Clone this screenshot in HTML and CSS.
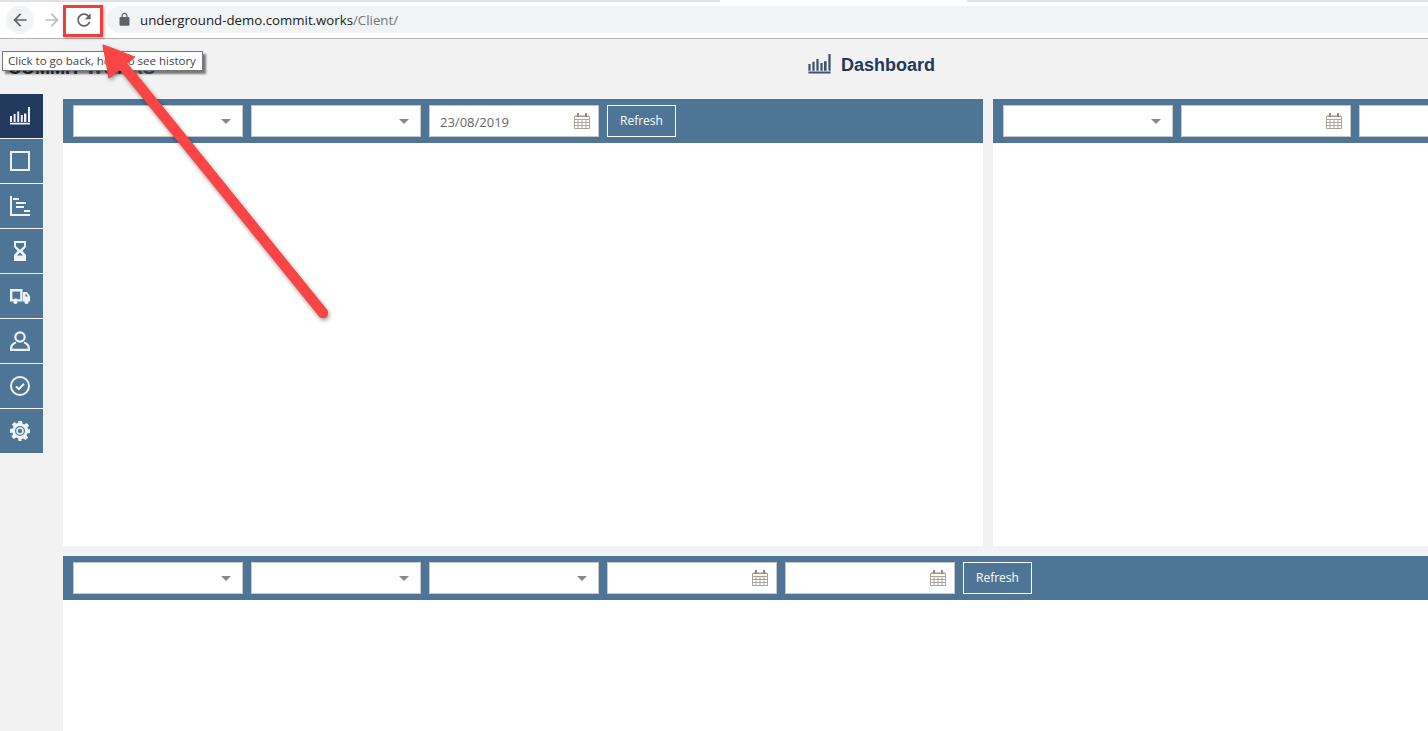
FILE: index.html
```html
<!DOCTYPE html>
<html lang="en">
<head>
<meta charset="utf-8">
<title>Dashboard</title>
<link rel="stylesheet" href="styles.css">
</head>
<body>
<svg class="defs" width="0" height="0" aria-hidden="true">
  <symbol id="i-bars" viewBox="0 0 20 18">
    <path fill="currentColor" d="M0 9h2v6H0zM3.600 7h2v8h-2zM7.200 4.500h2V15h-2zM10.800 8h2v7h-2zM14 6.500h2.400V15H14zM18 0h2v15h-2zM0 15.800h20V17.500H0z"/>
  </symbol>
  <symbol id="i-square" viewBox="0 0 20 20">
    <rect x="1" y="1" width="18" height="18" fill="none" stroke="currentColor" stroke-width="2"/>
  </symbol>
  <symbol id="i-gantt" viewBox="0 0 20 20">
    <path fill="currentColor" d="M0 0h2v18h18v2H0zM3 2h6v2H3zM6 6h10v2H6zM6 10h8v2H6zM14 14h6v2h-6z"/>
  </symbol>
  <symbol id="i-hourglass" viewBox="0 0 12 20">
    <path fill="currentColor" fill-rule="evenodd" d="M0 0h12v6L8.500 10 12 14v6H0v-6l3.500-4L0 6zM2 2v3.200L6 8.700l4-3.500V2zM6 11.500L3 14.500h6z"/>
  </symbol>
  <symbol id="i-truck" viewBox="0 0 20 15">
    <path fill="currentColor" fill-rule="evenodd" d="M0 0h12.500v12.500H8a2.800 2.800 0 0 0-5 0H0zM2.400 2.400v7.800h1c1-.9 3.300-.9 4.300 0h2.500V2.400z"/>
    <path fill="currentColor" fill-rule="evenodd" d="M13 3h3.800L20 7v5.500h-1a2.800 2.800 0 0 0-5 0h-1zM15.500 5v2.500h2.400l-1.800-2.500z"/>
    <circle cx="5.500" cy="12.800" r="2.200" fill="currentColor"/>
    <circle cx="16.500" cy="12.800" r="2.200" fill="currentColor"/>
  </symbol>
  <symbol id="i-person" viewBox="0 0 20 20">
    <g fill="none" stroke="currentColor" stroke-width="2.200">
      <circle cx="10" cy="6" r="4.700"/>
      <path d="M6 11.500C3 12.500 1.100 14.500 1.100 17.500V18.900h17.800v-1.400c0-3-1.900-5-4.900-6"/>
    </g>
  </symbol>
  <symbol id="i-check" viewBox="0 0 20 20">
    <circle cx="10" cy="10" r="9" fill="none" stroke="currentColor" stroke-width="2"/>
    <path d="M6 10.500l2.800 2.500L14 7.800" fill="none" stroke="currentColor" stroke-width="2"/>
  </symbol>
  <symbol id="i-gear" viewBox="0 0 20 20">
    <path fill="currentColor" fill-rule="evenodd" d="M8 0h4l.5 2.800 1.700.7 2.400-1.600 2.500 2.500-1.600 2.400.7 1.700L20 8v4l-2.800.5-.7 1.700 1.600 2.400-2.500 2.500-2.400-1.600-1.700.7L11.500 20h-3L8 17.200l-1.700-.7-2.400 1.600-2.500-2.500 1.600-2.400-.7-1.700L0 12V8l2.800-.5.7-1.700-1.600-2.400 2.500-2.500 2.400 1.600 1.700-.7zM10 5a5 5 0 1 0 0 10 5 5 0 0 0 0-10z"/>
    <circle cx="10" cy="10" r="3" fill="none" stroke="currentColor" stroke-width="1.600"/>
  </symbol>
  <symbol id="i-cal" viewBox="0 0 16 16">
    <path fill="#cfc8b8" d="M1 2h14v2H1z"/>
    <path fill="none" stroke="#aaa49a" d="M.5 3.500h15v12H.5zM.5 6.500h15M.5 9.500h15M.5 12.500h15M4 6.500v9M8 6.500v9M12 6.500v9"/>
    <path fill="#8c8c8c" d="M3 0h2v4H3zM11 0h2v4h-2z"/>
  </symbol>
</svg>

<div class="browser">
  <div class="tabstrip"><span class="tab-gap"></span></div>
  <div class="toolbar-row">
    <span class="nav-btn nav-back"><svg viewBox="0 0 24 24" width="20" height="20"><path fill="currentColor" d="M20 11H7.830l5.590-5.590L12 4l-8 8 8 8 1.410-1.410L7.830 13H20v-2z"/></svg></span>
    <span class="nav-btn nav-forward"><svg viewBox="0 0 24 24" width="20" height="20"><path fill="currentColor" d="M12 4l-1.410 1.410L16.170 11H4v2h12.170l-5.580 5.590L12 20l8-8z"/></svg></span>
    <span class="nav-btn nav-reload"><svg viewBox="0 0 24 24" width="20" height="20"><path fill="currentColor" d="M17.650 6.350C16.200 4.900 14.210 4 12 4c-4.420 0-7.990 3.580-7.990 8s3.570 8 7.990 8c3.730 0 6.840-2.550 7.730-6h-2.080c-.82 2.330-3.040 4-5.650 4-3.310 0-6-2.690-6-6s2.690-6 6-6c1.660 0 3.140.69 4.220 1.780L13 11h7V4l-2.350 2.350z"/></svg></span>
    <div class="omnibox">
      <svg class="lock" viewBox="0 0 24 24" width="15" height="15"><path fill="currentColor" d="M18 8h-1V6c0-2.760-2.240-5-5-5S7 3.240 7 6v2H6c-1.100 0-2 .9-2 2v10c0 1.100.9 2 2 2h12c1.100 0 2-.9 2-2V10c0-1.100-.9-2-2-2zM9 6c0-1.660 1.340-3 3-3s3 1.340 3 3v2H9V6z"/></svg>
      <span class="url">underground-demo.commit.works<span class="url-path">/Client/</span></span>
    </div>
  </div>
</div>

<div class="app">
  <header class="app-header">
    <div class="logo">COMMIT <span class="logo-accent">WORKS</span></div>
    <h1 class="page-title"><svg class="title-icon"><use href="#i-bars"/></svg>Dashboard</h1>
    <div></div>
  </header>
  <div class="app-body">
    <nav class="sidebar">
      <a class="side-item is-active"><svg class="ic-bars"><use href="#i-bars"/></svg></a>
      <a class="side-item"><svg class="ic-20"><use href="#i-square"/></svg></a>
      <a class="side-item"><svg class="ic-20"><use href="#i-gantt"/></svg></a>
      <a class="side-item"><svg class="ic-hourglass"><use href="#i-hourglass"/></svg></a>
      <a class="side-item"><svg class="ic-truck"><use href="#i-truck"/></svg></a>
      <a class="side-item"><svg class="ic-20"><use href="#i-person"/></svg></a>
      <a class="side-item"><svg class="ic-20"><use href="#i-check"/></svg></a>
      <a class="side-item"><svg class="ic-20"><use href="#i-gear"/></svg></a>
    </nav>
    <main class="panels">
      <section class="panel">
        <div class="filters">
          <div class="field"><span class="caret"></span></div>
          <div class="field"><span class="caret"></span></div>
          <div class="field"><span class="value">23/08/2019</span><svg class="cal"><use href="#i-cal"/></svg></div>
          <button class="refresh" type="button">Refresh</button>
        </div>
      </section>
      <section class="panel">
        <div class="filters">
          <div class="field"><span class="caret"></span></div>
          <div class="field"><svg class="cal"><use href="#i-cal"/></svg></div>
          <div class="field"><svg class="cal"><use href="#i-cal"/></svg></div>
          <button class="refresh" type="button">Refresh</button>
        </div>
      </section>
      <section class="panel panel-wide">
        <div class="filters">
          <div class="field"><span class="caret"></span></div>
          <div class="field"><span class="caret"></span></div>
          <div class="field"><span class="caret"></span></div>
          <div class="field"><svg class="cal"><use href="#i-cal"/></svg></div>
          <div class="field"><svg class="cal"><use href="#i-cal"/></svg></div>
          <button class="refresh" type="button">Refresh</button>
        </div>
      </section>
    </main>
  </div>
</div>

<div class="annot-box"></div>
<svg class="annot-arrow" width="1428" height="731" viewBox="0 0 1428 731">
  <path d="M323 313L125 68" fill="none" stroke="#fb4444" stroke-width="10" stroke-linecap="round"/>
  <path d="M103 45L135 57L109 78z" fill="#fb4444" stroke="#fb4444" stroke-width="1" stroke-linejoin="round"/>
</svg>
<div class="tooltip">Click to go back, hold to see history</div>
<svg class="annot-arrow annot-top" width="1428" height="731" viewBox="0 0 1428 731">
  <path d="M323 313L125 68" fill="none" stroke="#fb4444" stroke-width="10" stroke-linecap="round"/>
  <path d="M103 45L135 57L109 78z" fill="#fb4444" stroke="#fb4444" stroke-width="1" stroke-linejoin="round"/>
</svg>
</body>
</html>
```

FILE: styles.css
```css
* { box-sizing: border-box; }
html, body { margin: 0; height: 731px; overflow: hidden; }
body { background: #f2f2f2; font-family: "Open Sans", "Liberation Sans", sans-serif; position: relative; }
.defs { position: absolute; }

.browser { height: 39px; background: #fff; border-bottom: 1px solid #b4b4b4; }
.tabstrip { height: 2px; background: #dee1e6; display: flex; padding-left: 720px; }
.tab-gap { width: 247px; background: #fff; }
.toolbar-row { display: flex; align-items: flex-start; padding: 4px 0 0 6px; }
.nav-btn { width: 28px; height: 28px; display: flex; align-items: center; justify-content: center; border-radius: 50%; margin-right: 4px; color: #5f6368; }
.nav-back { background: #f1f3f4; }
.nav-forward { color: #b9bcc0; }
.omnibox { flex: 1; height: 27px; margin-left: 5px; background: #f1f3f4; border-radius: 14px 0 0 14px; display: flex; align-items: center; padding-left: 10px; }
.lock { color: #5f6368; margin-right: 8px; }
.url { font-size: 13.250px; color: #202124; white-space: nowrap; }
.url-path { color: #70757a; }

.app { width: 1913px; }
.app-header { height: 55px; width: 1735px; display: grid; grid-template-columns: 1fr auto 1fr; align-items: center; padding: 0 0 2px 8px; }
.logo { font: bold 18px "Liberation Sans", sans-serif; color: #22385c; position: relative; top: 3px; }
.logo-accent { color: #4f7596; }
.page-title { margin: 0; display: flex; align-items: center; font: bold 18px "Liberation Sans", sans-serif; color: #22385c; }
.title-icon { width: 23px; height: 20px; margin: -3px 10px 0 0; color: #3f5070; }

.app-body { display: flex; align-items: flex-start; }
.sidebar { width: 43px; flex: none; display: flex; flex-direction: column; gap: 1px; }
.side-item { height: 44px; background: #4f7596; color: #eef2f5; display: flex; align-items: center; justify-content: center; padding-right: 3px; }
.is-active { background: #22385c; }
.ic-bars { width: 20px; height: 18px; }
.ic-20 { width: 20px; height: 20px; }
.ic-hourglass { width: 12px; height: 20px; }
.ic-truck { width: 20px; height: 15px; }

.panels { margin: 5px 0 0 20px; display: grid; grid-template-columns: 920px 920px; grid-template-rows: 447px 175px; gap: 10px; }
.panel { background: #fff; }
.panel-wide { grid-column: 1 / -1; }
.filters { height: 44px; background: #4f7596; display: flex; align-items: flex-start; gap: 8px; padding: 6px 10px; }
.field { width: 170px; height: 32px; background: #fff; border: 1px solid #c8c8c8; display: flex; align-items: center; justify-content: space-between; padding: 0 8px 0 10px; }
.value { font-size: 13px; color: #666; padding-top: 2px; }
.caret { margin-left: auto; margin-right: 3px; width: 0; height: 0; border-left: 5.500px solid transparent; border-right: 5.500px solid transparent; border-top: 5.500px solid #8a8a8a; }
.cal { width: 16px; height: 16px; margin-left: auto; margin-top: -1px; }
.refresh { height: 32px; padding: 0 12px 2px; background: transparent; border: 1px solid #fff; color: #fff; font: 12px "Open Sans", sans-serif; }

.annot-box { position: absolute; left: 63px; top: 5px; width: 40px; height: 32px; border: 3px solid #ee3f3f; box-shadow: 1px 1px 3px rgba(0,0,0,.35); }
.annot-arrow { position: absolute; left: 0; top: 0; filter: drop-shadow(1px 2px 2px rgba(0,0,0,.45)); }
.annot-top { filter: none; }
.tooltip { position: absolute; left: 2px; top: 51px; width: 201px; height: 20px; padding-left: 5px; background: #fff; border: 1px solid #767676; box-shadow: 3px 3px 2px rgba(0,0,0,.5); font-size: 11.500px; line-height: 18px; color: #444; white-space: nowrap; }
```
